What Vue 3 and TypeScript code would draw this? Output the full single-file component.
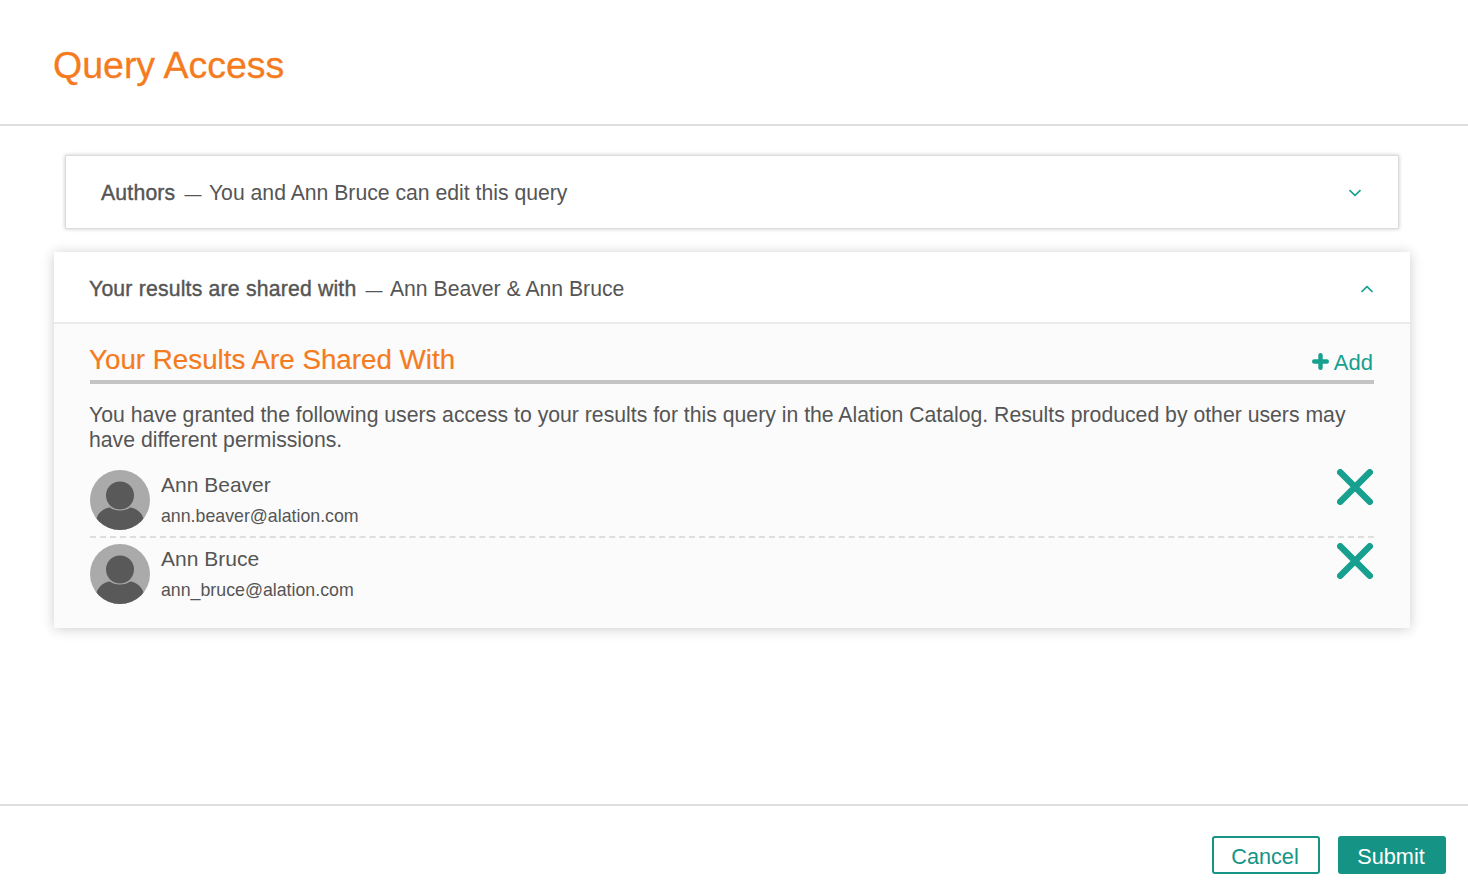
<script setup lang="ts">
interface User { name: string; email: string }
const users: User[] = [
  { name: 'Ann Beaver', email: 'ann.beaver@alation.com' },
  { name: 'Ann Bruce', email: 'ann_bruce@alation.com' },
]
</script>

<template>
  <div class="page">
    <header class="top">
      <h1>Query Access</h1>
    </header>
    <main class="body">
      <section class="authors">
        <p class="summary"><b>Authors</b><span class="dash">—</span>You and Ann Bruce can edit this query</p>
        <svg class="chev" width="14" height="8" viewBox="0 0 14 8"><path d="M1.5 1.2 7 6.4l5.5-5.2" /></svg>
      </section>
      <section class="shared">
        <div class="shared-head">
          <p class="summary"><b>Your results are shared with</b><span class="dash">—</span>Ann Beaver &amp; Ann Bruce</p>
          <svg class="chev" width="14" height="8" viewBox="0 0 14 8"><path d="M1.5 6.8 7 1.6l5.5 5.2" /></svg>
        </div>
        <div class="shared-body">
          <div class="title-row">
            <h2>Your Results Are Shared With</h2>
            <a class="add">
              <svg width="17" height="17" viewBox="0 0 17 17"><path d="M8.5 2.200v12.600M2.200 8.500h12.600" /></svg>
              Add
            </a>
          </div>
          <p class="intro">You have granted the following users access to your results for this query in the Alation Catalog. Results produced by other users may have different permissions.</p>
          <ul class="users">
            <li v-for="u in users" :key="u.email" class="user">
              <svg class="avatar" width="60" height="60" viewBox="0 0 60 60">
                <defs><clipPath id="circ"><circle cx="30" cy="30" r="30" /></clipPath></defs>
                <circle cx="30" cy="30" r="30" fill="#aaaaaa" />
                <g clip-path="url(#circ)" fill="#595959">
                  <circle cx="30" cy="25.5" r="14" />
                  <path d="M6 60V52C6 44 14 37.500 20 37.500C24 41.500 36 41.500 40 37.500C46 37.500 54 44 54 52V60Z" />
                </g>
              </svg>
              <div class="who">
                <div class="name">{{ u.name }}</div>
                <div class="email">{{ u.email }}</div>
              </div>
              <svg class="remove" width="36" height="36" viewBox="0 0 36 36"><path d="M3.250 3.250 32.750 32.750M32.750 3.250 3.250 32.750" /></svg>
            </li>
          </ul>
        </div>
      </section>
    </main>
    <footer class="bottom">
      <button class="btn cancel">Cancel</button>
      <button class="btn submit">Submit</button>
    </footer>
  </div>
</template>

<style>
html, body { margin: 0; background: #fff; }
</style>

<style scoped>
.page {
  width: 1468px;
  height: 890px;
  display: flex;
  flex-direction: column;
  font-family: "Liberation Sans", Arial, sans-serif;
  color: #555;
  overflow: hidden;
}
.top {
  height: 124px;
  border-bottom: 2px solid #dedede;
  padding-left: 53px;
  display: flex;
  align-items: flex-start;
  flex: none;
}
h1 {
  margin: 43px 0 0;
  font-size: 37.500px;
  line-height: 44px;
  font-weight: 400;
  color: #f47b20;
  -webkit-text-stroke: 0.3px #f47b20;
}
.body {
  flex: 1;
  min-height: 0;
  padding: 29px 58px 0 54px;
  display: flex;
  flex-direction: column;
  gap: 23px;
}
.authors {
  margin: 0 11px;
  height: 74px;
  box-sizing: border-box;
  padding: 0 37px 0 36px;
  display: flex;
  align-items: center;
  justify-content: space-between;
  background: #fff;
  box-shadow: inset 0 0 0 1px #dcdcdc, 0 0 4px rgba(0, 0, 0, 0.22);
}
.summary {
  margin: 2px 0 0;
  font-size: 21.200px;
  line-height: 24px;
  color: #555;
  padding-top: 2px;
}
.summary b { font-weight: 400; -webkit-text-stroke: 0.4px #555; letter-spacing: 0.2px; }
.dash { display: inline-block; font-size: 17px; margin: 0 7.500px 0 9px; }
.chev { fill: none; stroke: #17a090; stroke-width: 1.6; margin-top: 2px; }
.shared {
  background: #fbfbfb;
  box-shadow: 0 1px 12px rgba(0, 0, 0, 0.2);
  height: 376px;
}
.shared-head {
  border-bottom: 2px solid #ebebeb;
  background: #fff;
  padding: 0 36px 0 35px;
  display: flex;
  align-items: center;
  justify-content: space-between;
  box-sizing: border-box;
  height: 72px;
}
.shared-head .summary { margin-top: 4px; }
.shared-head .chev { margin-top: 4px; }
.shared-body { padding: 0 36px 0 35px; }
.title-row {
  height: 60px;
  box-sizing: border-box;
  display: flex;
  justify-content: space-between;
  align-items: flex-end;
  border-bottom: 4px solid #c4c4c4;
  margin-left: 1px;
  padding-bottom: 5px;
}
h2 {
  margin: 0 0 -1px -1px;
  font-size: 27.750px;
  line-height: 32px;
  font-weight: 400;
  color: #f47b20;
  -webkit-text-stroke: 0.2px #f47b20;
}
.add {
  display: flex;
  align-items: center;
  gap: 5px;
  font-size: 22px;
  line-height: 26px;
  color: #17a090;
  margin-bottom: -1px;
  margin-right: 1px;
}
.add svg { margin-top: -3px; }
.add path { fill: none; stroke: #17a090; stroke-width: 4.4; stroke-linecap: round; }
.intro {
  margin: 17.500px 0 0;
  font-size: 21.220px;
  line-height: 25px;
  color: #555;
}
.users { list-style: none; margin: 18.500px 0 0 1px; padding: 0; }
.user {
  height: 60px;
  padding-bottom: 6px;
  display: flex;
  align-items: flex-start;
  border-bottom: 2px dashed #dedede;
  margin-bottom: 6px;
}
.user:last-child { border-bottom: 0; }
.avatar { flex: none; }
.who { margin-left: 11px; flex: 1; }
.name { font-size: 21px; line-height: 30px; }
.email { font-size: 17.750px; line-height: 22px; margin-top: 5px; }
.remove { flex: none; margin-top: -1px; margin-right: 1px; }
.remove path { fill: none; stroke: #17a090; stroke-width: 6.500; stroke-linecap: round; }
.bottom {
  flex: none;
  height: 54px;
  border-top: 2px solid #dedede;
  display: flex;
  justify-content: flex-end;
  gap: 18px;
  padding: 30px 22px 0 0;
}
.btn {
  width: 108px;
  height: 38px;
  box-sizing: border-box;
  border-radius: 3px;
  border: 2px solid #159485;
  font-family: inherit;
  font-size: 21.700px;
  line-height: 1;
  padding: 3px 2px 0 0;
}
.cancel { background: #fff; color: #159485; }
.submit { background: #159485; color: #fff; }
</style>
